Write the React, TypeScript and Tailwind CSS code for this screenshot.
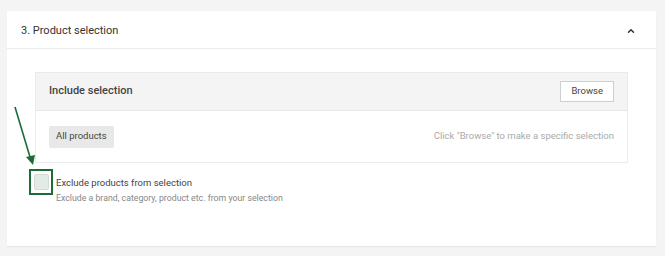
import { ChevronUp } from 'lucide-react';

export default function App() {
  return (
    <div className="relative w-[665px] h-[256px] bg-[#f4f4f4] pt-[11px] pl-[7px] pr-[9px] font-['Roboto',sans-serif]">
      <div className="bg-white h-[235px] shadow-[0_1px_1px_rgba(0,0,0,0.06)]">
        <div className="h-[38px] flex items-center justify-between pl-[14px] pr-[20px] pt-[3px] border-b border-[#ebebeb]">
          <span className="text-[11px] text-[#333]">3. Product selection</span>
          <ChevronUp size={10} strokeWidth={3.5} className="text-[#333]" />
        </div>
        <div className="px-[28px] pt-[23px]">
          <div className="border border-[#ebebeb]">
            <div className="h-[38px] bg-[#f4f4f4] border-b border-[#e6e6e6] flex items-center justify-between pl-[13px] pr-[13px]">
              <span className="text-[11px] font-medium text-[#444]">Include selection</span>
              <button className="h-[21px] px-[10px] bg-white border border-[#cfcfcf] text-[9.5px] text-[#444]">Browse</button>
            </div>
            <div className="h-[51px] flex items-center justify-between pl-[13px] pr-[13px]">
              <span className="h-[22px] px-[7px] flex items-center bg-[#e8e8e8] rounded-[2px] text-[9.5px] text-[#444]">All products</span>
              <span className="text-[9.5px] text-[#aaa]">Click "Browse" to make a specific selection</span>
            </div>
          </div>
        </div>
        <div className="flex items-start pl-[22px] pt-[6px]">
          <div className="w-[24px] h-[26px] border-2 border-[#1d6b38] flex items-center justify-center">
            <div className="w-[15px] h-[16px] bg-[#e3ebe5] border border-[#d5dcd7] rounded-[2px]" />
          </div>
          <div className="ml-[3px] pt-[9px] leading-none">
            <div className="text-[9.5px] text-[#444]">Exclude products from selection</div>
            <div className="text-[8.75px] text-[#888] mt-[6px]">Exclude a brand, category, product etc. from your selection</div>
          </div>
        </div>
      </div>
      <svg className="absolute left-0 top-0" width="665" height="256" viewBox="0 0 665 256">
        <line x1="15" y1="107" x2="30" y2="157" stroke="#1d6b38" strokeWidth="1.6" />
        <polygon points="26,157 35,155 33,165" fill="#1d6b38" />
      </svg>
    </div>
  );
}
